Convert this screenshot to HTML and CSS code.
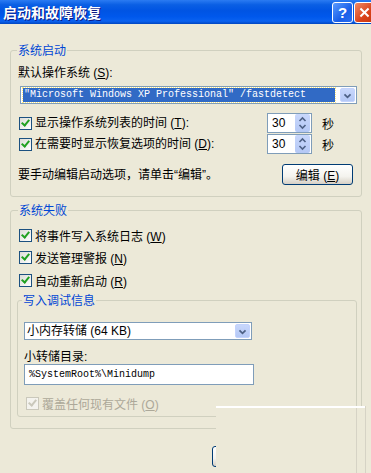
FILE: index.html
```html
<!doctype html>
<html>
<head>
    <title>启动和故障恢复</title>
    <meta charset="utf-8"/>
    <link rel="stylesheet" href="styles.css">
</head>
<body>
    <div class="window">
        <div class="titlebar">
            <span class="title">启动和故障恢复</span>
            <div class="caption-buttons">
                <span class="cap help">?</span>
                <span class="cap close">
                    <svg width="21" height="21" viewBox="0 0 21 21"><path d="M6 6l9 9M15 6l-9 9" stroke="#fff" stroke-width="2.2" fill="none"/></svg>
                </span>
            </div>
        </div>

        <div class="content">
            <fieldset class="group startup">
                <legend>系统启动</legend>
                <div class="label first">默认操作系统 (<u>S</u>):</div>
                <div class="combo os-combo">
                    <span class="combo-value selected">"Microsoft Windows XP Professional" /fastdetect</span>
                    <span class="combo-arrow"><svg width="15" height="14" viewBox="0 0 15 14"><path d="M4 5l3.5 3.5L11 5" stroke="#4D6185" stroke-width="2" fill="none"/></svg></span>
                </div>

                <div class="row time-row first-time">
                    <span class="check"></span>
                    <span class="row-text">显示操作系统列表的时间 (<u>T</u>):</span>
                    <span class="spinner">
                        <span class="spin-value">30</span>
                        <span class="spin-btns"><svg width="15" height="18" viewBox="0 0 15 18"><path d="M4.5 7l3-3 3 3M4.5 11l3 3 3-3" stroke="#4D6185" stroke-width="1.6" fill="none"/></svg></span>
                    </span>
                    <span class="unit">秒</span>
                </div>
                <div class="row time-row">
                    <span class="check"></span>
                    <span class="row-text">在需要时显示恢复选项的时间 (<u>D</u>):</span>
                    <span class="spinner">
                        <span class="spin-value">30</span>
                        <span class="spin-btns"><svg width="15" height="18" viewBox="0 0 15 18"><path d="M4.5 7l3-3 3 3M4.5 11l3 3 3-3" stroke="#4D6185" stroke-width="1.6" fill="none"/></svg></span>
                    </span>
                    <span class="unit">秒</span>
                </div>

                <div class="row edit-row">
                    <span class="row-text">要手动编辑启动选项，请单击“编辑”。</span>
                    <button class="btn edit-btn">编辑 (<u>E</u>)</button>
                </div>
            </fieldset>

            <fieldset class="group failure">
                <legend>系统失败</legend>
                <div class="row check-row first-check"><span class="check"></span><span>将事件写入系统日志 (<u>W</u>)</span></div>
                <div class="row check-row"><span class="check"></span><span>发送管理警报 (<u>N</u>)</span></div>
                <div class="row check-row third-check"><span class="check"></span><span>自动重新启动 (<u>R</u>)</span></div>

                <fieldset class="group debug">
                    <legend>写入调试信息</legend>
                    <div class="combo dump-combo">
                        <span class="combo-value">小内存转储 (64 KB)</span>
                        <span class="combo-arrow"><svg width="15" height="14" viewBox="0 0 15 14"><path d="M4 5l3.5 3.5L11 5" stroke="#4D6185" stroke-width="2" fill="none"/></svg></span>
                    </div>
                    <div class="label dir-label">小转储目录:</div>
                    <div class="textbox">%SystemRoot%\Minidump</div>
                    <div class="row check-row disabled"><span class="check"></span><span>覆盖任何现有文件 (<u>O</u>)</span></div>
                </fieldset>
            </fieldset>

            <div class="footer">
                <button class="btn ok-btn">确定</button>
            </div>
        </div>

        <!-- pasted-over patch in the bottom right corner of the shot -->
        <div class="patch"></div>
    </div>
</body>
</html>
```

FILE: styles.css
```css
body {
    margin: 0;
    background-color: #ECE9D8;
    font-family: "Liberation Sans", "Noto Sans CJK SC", sans-serif;
    font-size: 12px;
    color: #000;
}
.window {
    position: relative;
    width: 371px;
    height: 473px;
    overflow: hidden;
    background-color: #ECE9D8;
}
.titlebar {
    display: flex;
    align-items: center;
    height: 24px;
    padding-left: 3px;
    background: linear-gradient(#2B7BF2 0%, #0A5FE4 20%, #0054E3 45%, #0058EC 70%, #0A62F0 88%, #0046C0 100%);
}
.title {
    flex: 1;
    color: #fff;
    font-family: "Noto Sans CJK SC", sans-serif;
    font-weight: bold;
    font-size: 14px;
    line-height: 16px;
    text-shadow: 1px 1px #0A1883;
}
.caption-buttons {
    display: flex;
    gap: 1px;
    margin-right: -4px;
}
.cap {
    display: flex;
    align-items: center;
    justify-content: center;
    width: 19px;
    height: 19px;
    border: 1px solid #fff;
    border-radius: 3px;
    color: #fff;
    font-weight: bold;
    font-size: 15px;
}
.help {
    background: linear-gradient(135deg, #5A9BFF, #1A5FE8 60%, #2A6EF0);
}
.close {
    background: linear-gradient(135deg, #F08A66, #D9421A 60%, #C8380F);
}

.group {
    border: 1px solid #D0D0BF;
    border-radius: 3px;
    margin: 0 9px 0 10px;
    min-width: 0;
}
.group legend {
    color: #0046D5;
    font-family: "Noto Sans CJK SC", sans-serif;
    line-height: 14px;
    padding: 0 1px;
    margin-left: -1px;
}
.startup {
    margin-top: 19px;
    padding: 0 7px 11px 7px;
}
.failure {
    margin-top: 6px;
    padding: 0 4px 11px 6px;
}
.failure > legend {
    margin-left: 1px;
}
.debug {
    margin: 5px 0 0 0;
    padding: 0 6px 5px 6px;
}
.debug legend {
    margin-left: -2px;
}

.label {
    line-height: 14px;
}
.label.first {
    margin-top: 9px;
}
.dir-label {
    margin-top: 10px;
}
u {
    text-decoration: underline;
}

.combo {
    display: flex;
    align-items: center;
    height: 16px;
    border: 1px solid #7F9DB9;
    background-color: #fff;
    padding: 0 1px 0 2px;
}
.os-combo {
    margin: 6px 0 0 2px;
    width: 332px;
}
.dump-combo {
    margin-top: 15px;
    width: 223px;
}
.combo-value {
    flex: 1;
    line-height: 12px;
    white-space: nowrap;
}
.os-combo .combo-value {
    font-family: "Liberation Mono", monospace;
    font-size: 10px;
}
.selected {
    background-color: #316AC5;
    color: #fff;
    outline: 1px dotted #FFE97F;
    margin-right: 5px;
    padding: 1px 0 1px 1px;
}
.combo-arrow {
    display: flex;
    width: 15px;
    height: 14px;
    border-radius: 2px;
    background: linear-gradient(#C8D7FB, #B4C8F5);
    border: 1px solid #C3D3FD;
    box-sizing: border-box;
}

.row {
    display: flex;
    align-items: center;
}
.time-row {
    height: 20px;
    margin-top: 1px;
}
.first-time {
    margin-top: 9px;
}
.row-text {
    flex: 1;
    line-height: 14px;
}
.check {
    position: relative;
    display: inline-block;
    flex: none;
    width: 11px;
    height: 11px;
    border: 1px solid #1C5180;
    background: linear-gradient(135deg, #DCDCD7, #fff);
    margin: 0 3px 0 1px;
}
.check::after {
    content: "";
    position: absolute;
    left: 3px;
    top: 0px;
    width: 3px;
    height: 6px;
    border-right: 2px solid #21A121;
    border-bottom: 2px solid #21A121;
    transform: rotate(40deg);
}
.spinner {
    display: flex;
    align-items: center;
    width: 43px;
    height: 18px;
    border: 1px solid #7F9DB9;
    background-color: #fff;
}
.spin-value {
    flex: 1;
    padding-left: 4px;
    line-height: 14px;
}
.spin-btns {
    display: flex;
    width: 15px;
    height: 18px;
    margin-right: 1px;
    border-radius: 2px;
    background: linear-gradient(#C8D7FB, #B4C8F5);
}
.unit {
    width: 42px;
    padding-left: 10px;
    box-sizing: border-box;
    font-family: "Noto Sans CJK SC", sans-serif;
}

.edit-row {
    margin-top: 10px;
}
.btn {
    font-family: "Liberation Sans", "Noto Sans CJK SC", sans-serif;
    font-size: 12px;
    height: 21px;
    border: 1px solid #003C74;
    border-radius: 3px;
    background: linear-gradient(#FFFFFF, #F4F3EE 60%, #D6D0C5);
    padding: 0;
    color: #000;
}
.edit-btn {
    width: 71px;
    margin-right: 1px;
}

.check-row {
    height: 16px;
    margin-top: 6px;
    margin-left: 1px;
}
.first-check {
    margin-top: 10px;
}
.third-check {
    margin-top: 7px;
}
.textbox {
    width: 224px;
    height: 19px;
    border: 1px solid #7F9DB9;
    background-color: #fff;
    padding-left: 4px;
    font-family: "Liberation Mono", monospace;
    font-size: 10px;
    line-height: 19px;
}
.disabled {
    margin-top: 10px;
    color: #ACA899;
}
.disabled .check {
    border-color: #CAC8BB;
    background: #F4F3EE;
}
.disabled .check::after {
    border-color: #CAC8BB;
}

.footer {
    display: flex;
    padding-left: 212px;
    margin-top: 17px;
}
.ok-btn {
    width: 75px;
}

.patch {
    position: absolute;
    left: 216px;
    top: 406px;
    right: 0;
    bottom: 0;
    background:
        linear-gradient(to right, transparent 140px, #D6D3C5 140px, #D6D3C5 141px, transparent 141px,
                        transparent 149px, #D6D3C5 149px, #D6D3C5 150px, transparent 150px),
        #ECE9D8;
}
.patch::before {
    content: "";
    display: block;
    width: 149px;
    height: 2px;
    background-color: #fff;
}
```
